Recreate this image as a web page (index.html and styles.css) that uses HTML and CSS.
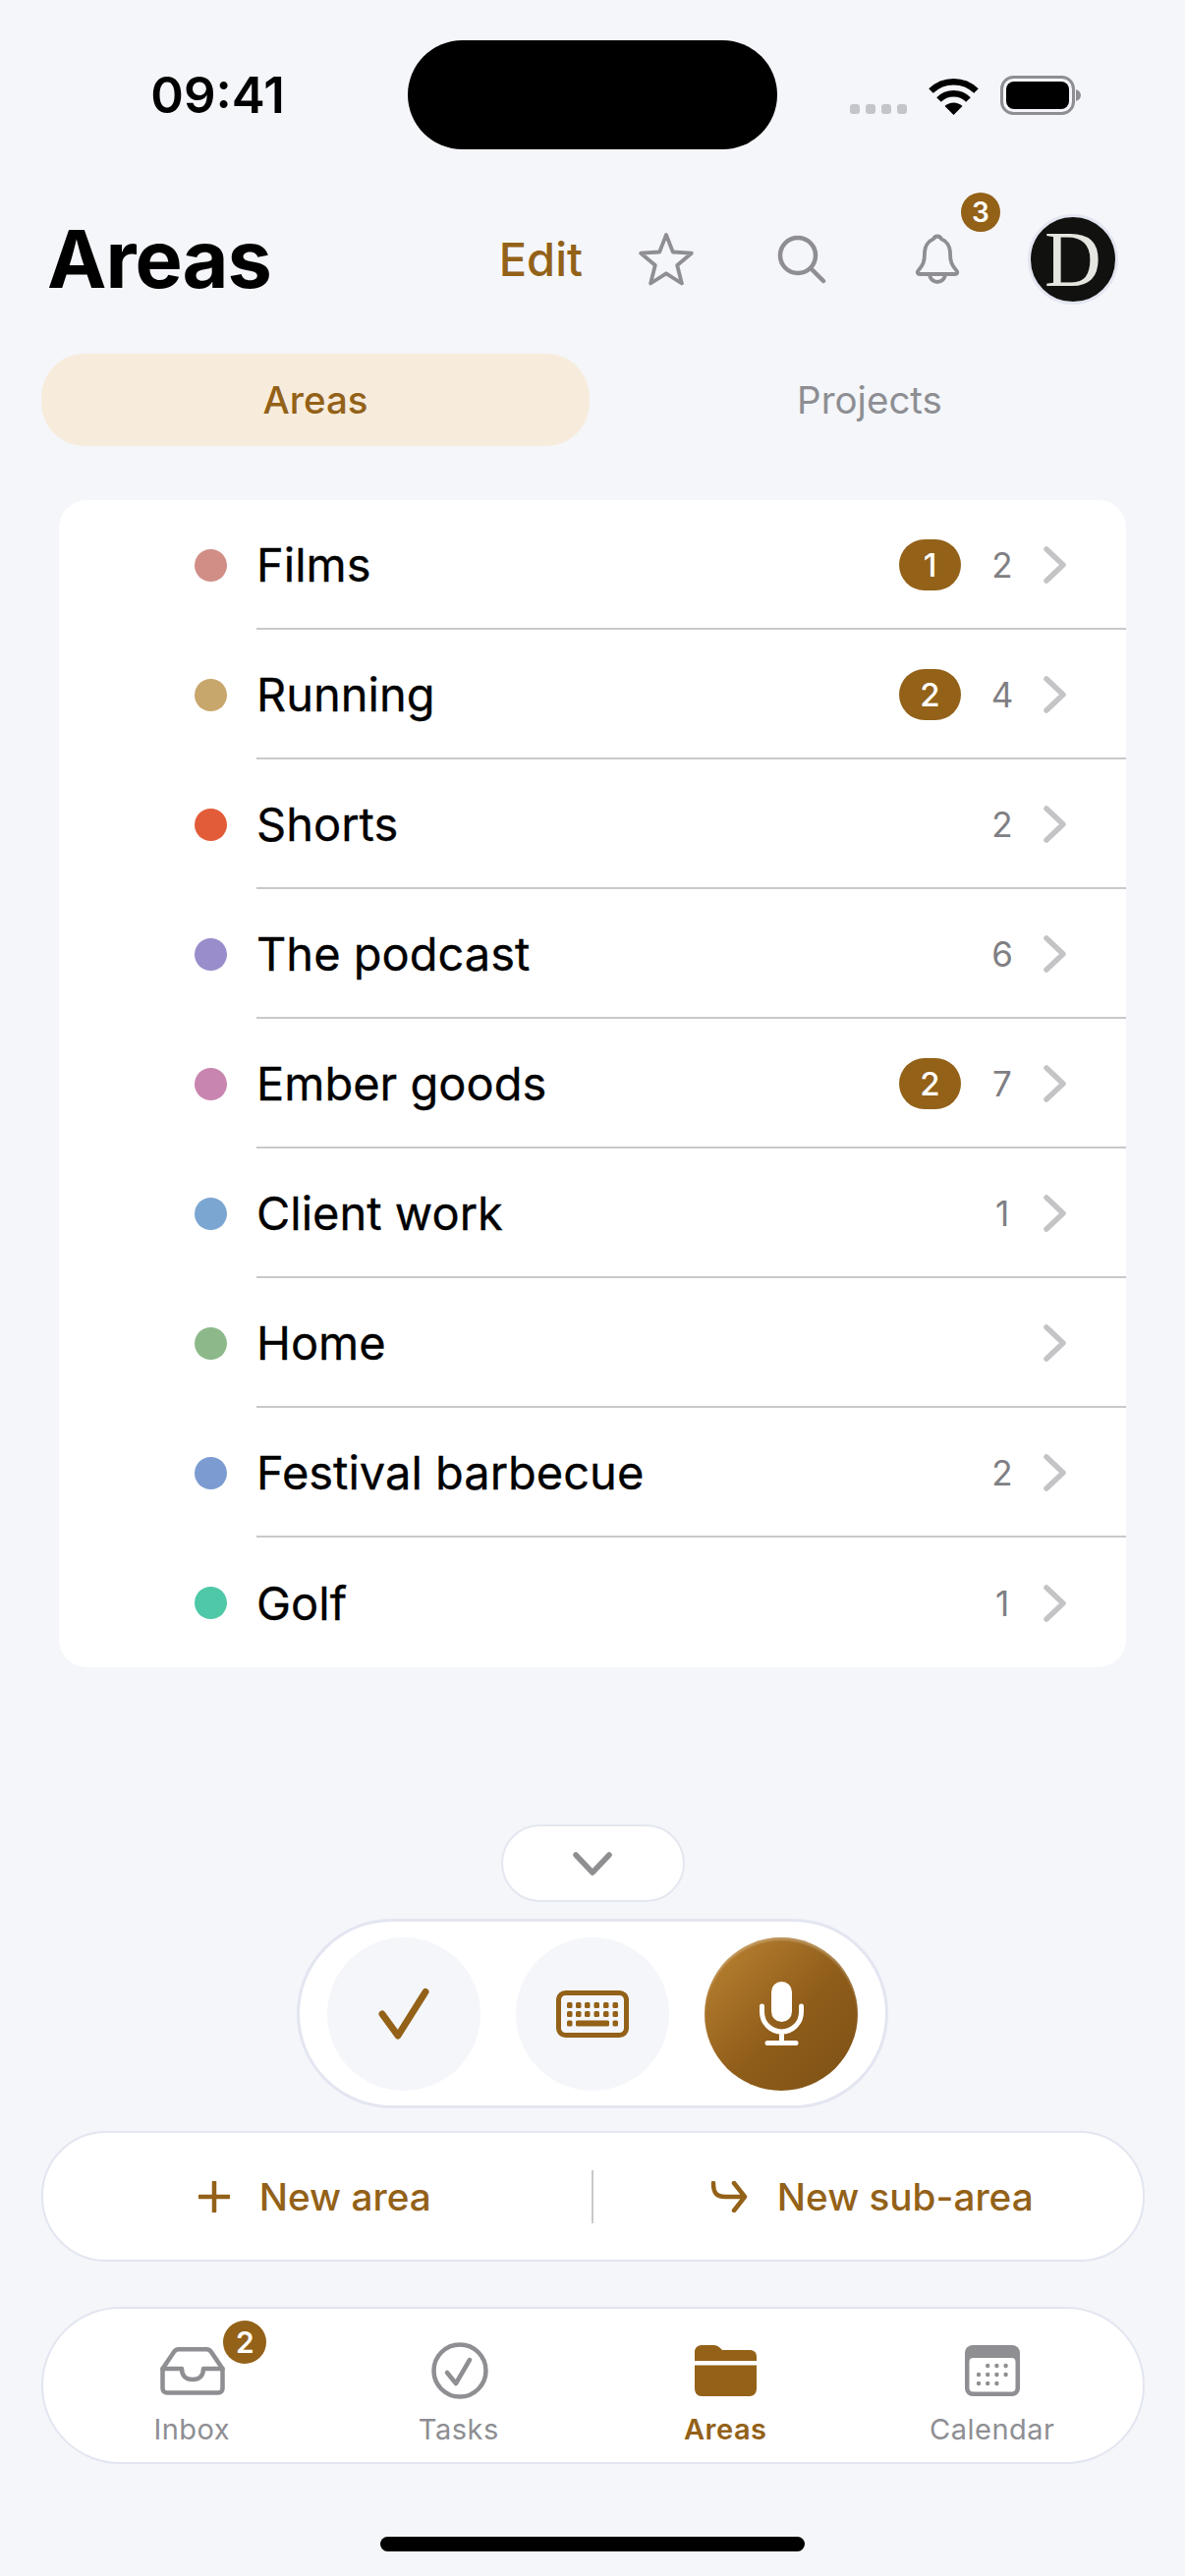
FILE: index.html
```html
<!DOCTYPE html>
<html lang="en">
<head>
<meta charset="utf-8">
<title>Areas</title>
<link rel="stylesheet" href="styles.css">
</head>
<body>
<div class="app">
  <div class="status">
    <div class="time">09:41</div>
    <div class="island"></div>
    <div class="status-icons">
      <div class="signal"><i></i><i></i><i></i><i></i></div>
      <svg class="wifi" width="51" height="38" viewBox="0 0 51 38"><path d="M2.5 13.5A33 33 0 0 1 48.5 13.5" class="wifi-arc"/><path d="M10.5 22.5A21 21 0 0 1 40.5 22.5" class="wifi-arc"/><path d="M16.5 29A13 13 0 0 1 34.5 29L25.500 38z"/></svg>
      <svg class="battery" width="83" height="40" viewBox="0 0 83 40"><rect x="1.500" y="1.500" width="73" height="37" rx="12" fill="none" stroke="#8e8e93" stroke-width="3"/><rect x="6" y="6" width="64" height="28" rx="8"/><path d="M77 14c3 1 5 3 5 6s-2 5-5 6z" fill="#8e8e93"/></svg>
    </div>
  </div>

  <header class="header">
    <h1 class="title">Areas</h1>
    <div class="actions">
      <span class="edit">Edit</span>
      <div class="hd-btn"><svg width="58" height="56" viewBox="0 0 58 56"><path class="ln thin" d="M29 3l6.800 17.500 19 1.200-14.600 12.300 4.700 18.500L29 42.300 13.100 52.500l4.700-18.500L3.200 21.700l19-1.200z"/></svg></div>
      <div class="hd-btn"><svg width="50" height="50" viewBox="0 0 50 50"><circle class="ln" cx="21" cy="21" r="18"/><path class="ln" d="M34 34l13 13"/></svg></div>
      <div class="hd-btn bell"><svg width="46" height="52" viewBox="0 0 46 52"><path class="ln thin" d="M23 2.500a4.500 4.500 0 0 0-4 2.700C13.500 7.300 10 13 10 20c0 8-1.500 12-6.500 17.500-1.500 1.600-.6 3.500 1.600 3.500h35.800c2.200 0 3.100-1.900 1.600-3.500C37.500 32 36 28 36 20c0-7-3.500-12.700-9-14.800a4.500 4.500 0 0 0-4-2.700z"/><path class="ln thin" d="M15 41a8 8 0 0 0 16 0"/></svg><span class="badge badge-bell">3</span></div>
      <div class="avatar"><span>D</span></div>
    </div>
  </header>

  <div class="segment">
    <div class="seg seg-on">Areas</div>
    <div class="seg">Projects</div>
  </div>

  <section class="card">
    <div class="row"><i class="dot c1"></i><div class="row-main"><span class="name">Films</span><span class="pill">1</span><span class="count">2</span><svg class="chev" width="26" height="38" viewBox="0 0 26 38"><path d="M4 3l17 16L4 35"/></svg></div></div>
    <div class="row"><i class="dot c2"></i><div class="row-main"><span class="name">Running</span><span class="pill">2</span><span class="count">4</span><svg class="chev" width="26" height="38" viewBox="0 0 26 38"><path d="M4 3l17 16L4 35"/></svg></div></div>
    <div class="row"><i class="dot c3"></i><div class="row-main"><span class="name">Shorts</span><span class="count">2</span><svg class="chev" width="26" height="38" viewBox="0 0 26 38"><path d="M4 3l17 16L4 35"/></svg></div></div>
    <div class="row"><i class="dot c4"></i><div class="row-main"><span class="name">The podcast</span><span class="count">6</span><svg class="chev" width="26" height="38" viewBox="0 0 26 38"><path d="M4 3l17 16L4 35"/></svg></div></div>
    <div class="row"><i class="dot c5"></i><div class="row-main"><span class="name">Ember goods</span><span class="pill">2</span><span class="count">7</span><svg class="chev" width="26" height="38" viewBox="0 0 26 38"><path d="M4 3l17 16L4 35"/></svg></div></div>
    <div class="row"><i class="dot c6"></i><div class="row-main"><span class="name">Client work</span><span class="count">1</span><svg class="chev" width="26" height="38" viewBox="0 0 26 38"><path d="M4 3l17 16L4 35"/></svg></div></div>
    <div class="row"><i class="dot c7"></i><div class="row-main"><span class="name">Home</span><span class="count"></span><svg class="chev" width="26" height="38" viewBox="0 0 26 38"><path d="M4 3l17 16L4 35"/></svg></div></div>
    <div class="row"><i class="dot c8"></i><div class="row-main"><span class="name">Festival barbecue</span><span class="count">2</span><svg class="chev" width="26" height="38" viewBox="0 0 26 38"><path d="M4 3l17 16L4 35"/></svg></div></div>
    <div class="row row-last"><i class="dot c9"></i><div class="row-main"><span class="name">Golf</span><span class="count">1</span><svg class="chev" width="26" height="38" viewBox="0 0 26 38"><path d="M4 3l17 16L4 35"/></svg></div></div>
  </section>

  <div class="bottom">
    <div class="collapse"><svg width="40" height="26" viewBox="0 0 40 26"><path class="ln thick" d="M3 4l17 18L37 4"/></svg></div>
    <div class="capture">
      <div class="cap-btn"><svg width="53" height="53" viewBox="0 0 53 53"><path class="brown-ln" d="M4 27l16 22L48 4.500"/></svg></div>
      <div class="cap-btn"><svg width="74" height="48" viewBox="0 0 74 48">
        <rect x="2.500" y="2.500" width="69" height="43" rx="7" fill="none" stroke="#936118" stroke-width="5"/>
        <g fill="#936118">
          <rect x="11" y="12" width="5.500" height="6" rx="1.500"/><rect x="20" y="12" width="5.500" height="6" rx="1.500"/><rect x="29" y="12" width="5.500" height="6" rx="1.500"/><rect x="38.500" y="12" width="5.500" height="6" rx="1.500"/><rect x="48" y="12" width="5.500" height="6" rx="1.500"/><rect x="57.500" y="12" width="5.500" height="6" rx="1.500"/>
          <rect x="11" y="21" width="5.500" height="6" rx="1.500"/><rect x="20" y="21" width="5.500" height="6" rx="1.500"/><rect x="29" y="21" width="5.500" height="6" rx="1.500"/><rect x="38.500" y="21" width="5.500" height="6" rx="1.500"/><rect x="48" y="21" width="5.500" height="6" rx="1.500"/><rect x="57.500" y="21" width="5.500" height="6" rx="1.500"/>
          <rect x="11" y="30.500" width="5.500" height="6" rx="1.500"/><rect x="20" y="30.500" width="34" height="6" rx="1.500"/><rect x="57.500" y="30.500" width="5.500" height="6" rx="1.500"/>
        </g></svg></div>
      <div class="cap-btn mic"><svg width="45" height="65" viewBox="0 0 45 65"><rect x="12" y="0" width="21" height="41" rx="10.500" fill="#fff"/><path d="M2.500 25v6a20 20 0 0 0 40 0v-6M22.500 51v11M8 62.500h29" fill="none" stroke="#fff" stroke-width="5" stroke-linecap="round"/></svg></div>
    </div>
    <div class="action-bar">
      <div class="action action-left"><svg width="32" height="32" viewBox="0 0 32 32"><path class="brown-thin" d="M16 1v30M1 16h30"/></svg><span>New area</span></div>
      <i class="action-sep"></i>
      <div class="action action-right"><svg width="38" height="32" viewBox="0 0 38 32"><path class="brown-thin" d="M3 2c0 10 3 14 12 14h20M24 2l11 14-11 14"/></svg><span>New sub-area</span></div>
    </div>
    <nav class="tabbar">
      <div class="tab">
        <div class="tab-ico inbox-ico"><svg width="66" height="49" viewBox="0 0 66 49"><g class="tab-ln"><path d="M2.500 22L14 5c1-1.500 2.500-2.700 4.500-2.700h29c2 0 3.500 1.200 4.500 2.700L63.500 22v20c0 3-2 4.500-4.500 4.500H7c-2.500 0-4.500-1.500-4.500-4.500z"/><path d="M2.500 22H22c0 7 4 11 11 11s11-4 11-11h19.500"/></g></svg><span class="badge badge-inbox">2</span></div>
        <span class="tab-label">Inbox</span>
      </div>
      <div class="tab">
        <div class="tab-ico tasks-ico"><svg width="58" height="58" viewBox="0 0 58 58"><g class="tab-ln"><circle cx="29" cy="29" r="26.500"/><path d="M16 31l9 11 14-24"/></g></svg></div>
        <span class="tab-label">Tasks</span>
      </div>
      <div class="tab tab-on">
        <div class="tab-ico"><svg width="63" height="52" viewBox="0 0 63 52"><path fill="#936118" d="M0 7c0-4 3-7 7-7h12c3 0 5 1 7 3l2 2h28c4 0 7 2 7 7v4H0zM0 20.500h63V44c0 5-3 8-7 8H7c-4 0-7-3-7-8z"/></svg></div>
        <span class="tab-label">Areas</span>
      </div>
      <div class="tab">
        <div class="tab-ico"><svg width="56" height="52" viewBox="0 0 56 52"><rect width="56" height="52" rx="8" fill="#8e8e93"/><rect x="4.500" y="13" width="47" height="34.500" rx="4" fill="#fff"/><g fill="#8e8e93"><circle cx="23.200" cy="21" r="2.200"/><circle cx="32.400" cy="21" r="2.200"/><circle cx="41.600" cy="21" r="2.200"/><circle cx="14" cy="30" r="2.200"/><circle cx="23.200" cy="30" r="2.200"/><circle cx="32.400" cy="30" r="2.200"/><circle cx="41.600" cy="30" r="2.200"/><circle cx="14" cy="39" r="2.200"/><circle cx="23.200" cy="39" r="2.200"/><circle cx="32.400" cy="39" r="2.200"/></g></svg></div>
        <span class="tab-label">Calendar</span>
      </div>
    </nav>
    <div class="home"></div>
  </div>
</div>
</body>
</html>
```

FILE: styles.css
```css
* { box-sizing: border-box; }
html, body { margin: 0; padding: 0; }
body { background: #f4f6fa; font-family: Inter, "Noto Sans", sans-serif; color: #000; }
.app { width: 1206px; height: 2622px; display: flex; flex-direction: column; overflow: hidden; }

.status { height: 152px; padding: 41px 0 0; display: grid; grid-template-columns: 415px 376px 415px; }
.time { font-size: 51px; font-weight: 600; text-align: center; padding: 26px 0 0 28px; line-height: 60px; }
.island { height: 111px; background: #000; border-radius: 56px; }
.status-icons { display: flex; align-items: flex-end; padding: 37px 0 0 74px; height: 76px; }
.signal { display: flex; gap: 6px; height: 10px; align-self: flex-end; margin-bottom: 1px; }
.signal i { width: 10px; height: 10px; border-radius: 3px; background: #c4c5c9; }
.wifi { margin-left: 22px; }
.wifi-arc { fill: none; stroke: #000; stroke-width: 6.5; }
.battery { margin-left: 22px; }

.header { height: 198px; padding: 60px 45px 0 48px; display: flex; align-items: flex-start; }
.title { margin: 2px 0 0; font-size: 81px; font-weight: 700; line-height: 100px; letter-spacing: -1px; }
.actions { margin-left: auto; display: flex; align-items: center; height: 104px; }
.edit { color: #936118; font-size: 47px; font-weight: 500; margin: -2px 16px 0 0; }
.hd-btn { width: 138px; display: flex; justify-content: center; position: relative; }
.ln { fill: none; stroke: #8e8e93; stroke-width: 4.5; stroke-linecap: round; stroke-linejoin: round; }
.thin { stroke-width: 3.8; }
.thick { stroke-width: 5.5; }
.badge { position: absolute; border-radius: 50%; background: #936118; color: #fff; display: flex; align-items: center; justify-content: center; font-weight: 600; }
.badge-bell { width: 40px; height: 40px; font-size: 28px; top: -42px; left: 93px; }
.avatar { width: 92px; height: 92px; margin-left: 23px; margin-right: 23px; border-radius: 50%; background: #111210; border: 3px solid #e3e5f0; display: flex; align-items: center; justify-content: center; }
.avatar span { font-family: "Liberation Serif", serif; font-size: 80px; line-height: 1; color: #e6e6e0; }

.segment { display: flex; gap: 6px; padding: 0 42px; height: 94px; margin-top: 10px; }
.seg { flex: 1; display: flex; align-items: center; justify-content: center; font-size: 38.5px; border-radius: 44px; color: #8e8e93; }
.seg-on { background: #f7ecdc; color: #936118; font-weight: 500; }

.card { margin: 55px 60px 0; background: #fff; border-radius: 28px; }
.row { height: 132px; display: flex; align-items: stretch; padding-left: 138px; }
.dot { width: 33px; height: 33px; border-radius: 50%; margin: 50px 30px 0 0; flex: none; }
.c1 { background: #d08e86; } .c2 { background: #c8a76c; } .c3 { background: #e25c3a; }
.c4 { background: #9a8dcb; } .c5 { background: #c885af; } .c6 { background: #7ba6d1; }
.c7 { background: #8db98a; } .c8 { background: #7b9bd1; } .c9 { background: #4fc8a8; }
.row-main { flex: 1; display: flex; align-items: center; border-bottom: 2px solid #c9c9cc; padding: 2px 59px 0 0; }
.row-last .row-main { border-bottom: 0; }
.name { font-size: 47px; margin-right: auto; margin-top: -2px; -webkit-text-stroke: .3px #000; }
.pill { width: 63px; height: 52px; border-radius: 26px; background: #936118; color: #fff; font-size: 33px; font-weight: 500; display: flex; align-items: center; justify-content: center; margin-right: 1px; }
.count { width: 82px; text-align: center; font-size: 35px; color: #7f7f84; }
.chev { fill: none; }
.chev path { stroke: #c4c4c6; stroke-width: 5.5; stroke-linecap: round; stroke-linejoin: round; fill: none; }

.bottom { flex: 1; display: flex; flex-direction: column; align-items: center; padding-top: 160px; }
.collapse { width: 187px; height: 79px; border-radius: 40px; background: #fff; border: 2px solid #e5e7f0; display: flex; align-items: center; justify-content: center; }
.capture { margin-top: 17px; width: 602px; height: 193px; border-radius: 97px; background: #fff; border: 3px solid #e3e5f0; display: flex; align-items: center; justify-content: center; gap: 36px; }
.cap-btn { width: 156px; height: 156px; border-radius: 50%; background: #f4f6fa; display: flex; align-items: center; justify-content: center; }
.mic { background: linear-gradient(135deg, #bd8534 0%, #8f5d1a 55%, #7c5014 100%); box-shadow: inset 0 3px 2px rgba(255,255,255,.25); }
.brown-ln { fill: none; stroke: #936118; stroke-width: 7; stroke-linecap: round; stroke-linejoin: round; }
.brown-thin { fill: none; stroke: #936118; stroke-width: 4.5; stroke-linecap: round; stroke-linejoin: round; }

.action-bar { margin-top: 23px; width: 1123px; height: 133px; border-radius: 66px; background: #fff; border: 2px solid #e3e5f0; display: flex; align-items: center; }
.action { flex: 0 0 calc((100% - 2px) / 2); display: flex; align-items: center; justify-content: center; gap: 30px; color: #936118; font-size: 38.7px; font-weight: 500; }
.action-left { padding-right: 5px; }
.action-right { padding-left: 8px; }
.action-sep { flex: none; width: 2px; height: 54px; background: #c9c9cc; }

.tabbar { margin-top: 46px; width: 1123px; height: 160px; border-radius: 80px; background: #fff; border: 2px solid #e3e5f0; display: grid; grid-template-columns: repeat(4, 271.5px); padding: 0 16px; }
.tab { display: flex; flex-direction: column; align-items: center; padding-top: 30px; }
.tab-ico { position: relative; height: 66px; display: flex; align-items: center; justify-content: center; }
.inbox-ico, .tasks-ico { padding-left: 2px; }
.tab-ln { fill: none; stroke: #8e8e93; stroke-width: 4.5; stroke-linecap: round; stroke-linejoin: round; }
.tab-label { font-size: 29px; color: #8e8e93; line-height: 36px; margin-top: 9px; letter-spacing: .5px; }
.tab-on .tab-label { color: #936118; font-weight: 600; }
.badge-inbox { width: 44px; height: 44px; font-size: 30px; left: 66px; top: -18px; }

.home { margin-top: 74px; width: 432px; height: 15px; border-radius: 8px; background: #000; }
```
